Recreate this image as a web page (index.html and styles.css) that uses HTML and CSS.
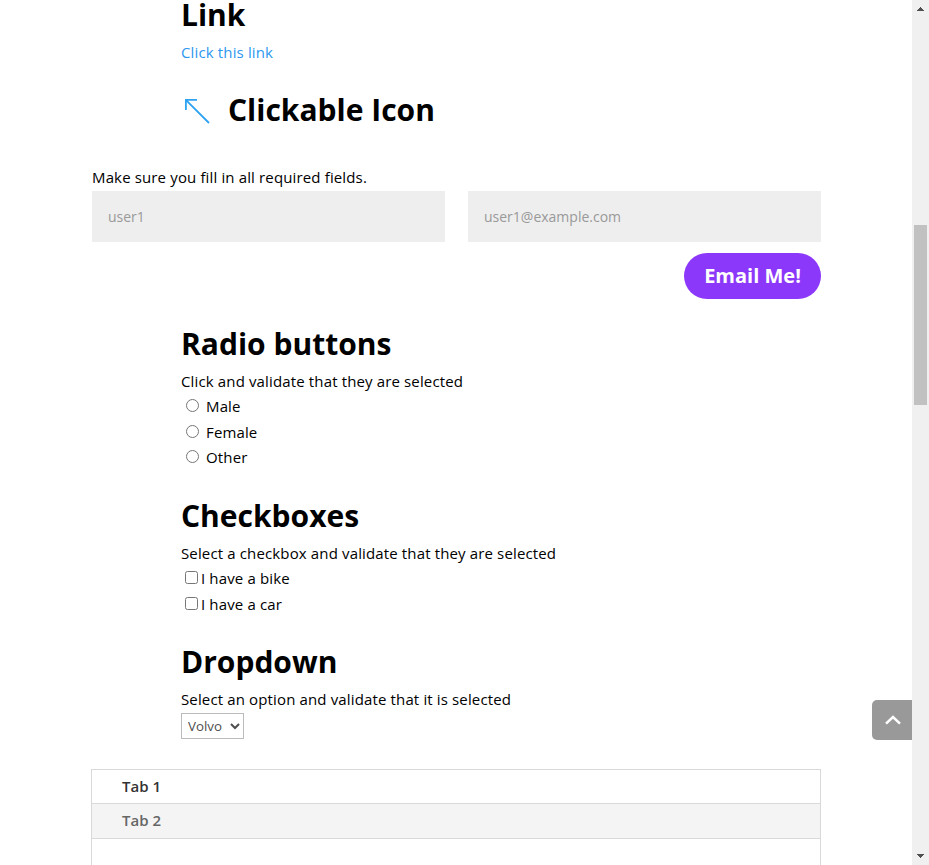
FILE: index.html
```
<!DOCTYPE html>
<html lang="en">
<head>
<meta charset="utf-8">
<title>Automation Practice</title>
<link rel="stylesheet" href="styles.css">
</head>
<body>
<div class="window">
  <main class="page">
    <section class="module link-module">
      <h2>Link</h2>
      <p><a href="#">Click this link</a></p>
    </section>
    <section class="module icon-module">
      <a href="#" class="arrow-link"><svg width="26" height="26" viewBox="0 0 26 26"><path d="M1.9 12V1.9H13M2.3 2.3L25 25" fill="none" stroke="#2ea3f2" stroke-width="1.8"/></svg></a>
      <h2>Clickable Icon</h2>
    </section>
    <form class="contact">
      <p>Make sure you fill in all required fields.</p>
      <div class="fields">
        <input type="text" placeholder="user1">
        <input type="text" placeholder="user1@example.com">
      </div>
      <button type="button">Email Me!</button>
    </form>
    <section class="module radio-module">
      <h2>Radio buttons</h2>
      <p>Click and validate that they are selected</p>
      <label class="row radio"><input type="radio" name="gender">Male</label>
      <label class="row radio"><input type="radio" name="gender">Female</label>
      <label class="row radio"><input type="radio" name="gender">Other</label>
    </section>
    <section class="module check-module">
      <h2>Checkboxes</h2>
      <p>Select a checkbox and validate that they are selected</p>
      <label class="row check"><input type="checkbox">I have a bike</label>
      <label class="row check"><input type="checkbox">I have a car</label>
    </section>
    <section class="module drop-module">
      <h2>Dropdown</h2>
      <p>Select an option and validate that it is selected</p>
      <select><option>Volvo</option></select>
    </section>
    <section class="tabs">
      <div class="tab active">Tab 1</div>
      <div class="tab">Tab 2</div>
      <div class="panel"></div>
    </section>
    <a href="#" class="to-top"><svg width="40" height="40" viewBox="0 0 40 40"><path d="M14 23.6L21 17L28 23.6" fill="none" stroke="#fff" stroke-width="2.5"/></svg></a>
  </main>
  <div class="scrollbar">
    <svg class="cap" width="17" height="17" viewBox="0 0 17 17" shape-rendering="crispEdges"><path d="M5 11V10H6V9H7V8H8V7H9V8H10V9H11V10H12V11Z" fill="#505050"/></svg>
    <div class="thumb"></div>
    <svg class="cap" width="17" height="17" viewBox="0 0 17 17" shape-rendering="crispEdges"><path d="M5 6V7H6V8H7V9H8V10H9V9H10V8H11V7H12V6Z" fill="#505050"/></svg>
  </div>
</div>
</body>
</html>
```
FILE: styles.css
```
* { box-sizing: border-box; }
body {
  margin: 0;
  background: #fff;
  color: #000;
  font: 500 15px/25.5px "Open Sans", "Noto Sans", sans-serif;
  overflow: hidden;
}
h2, p { margin: 0; }
p, .row { letter-spacing: 0.14px; }
h2 { font-size: 30px; line-height: 30px; font-weight: 700; padding-bottom: 10px; }
a { color: #2e98f0; text-decoration: none; }
.window { display: flex; height: 865px; overflow: hidden; }
.page { flex: 1; height: 865px; padding: 0 91px; overflow: hidden; position: relative; }
.module { width: 550px; margin-left: 90px; }
.link-module { height: 93px; }
.icon-module { display: flex; align-items: flex-start; gap: 17px; height: 71px; padding-top: 2px; }
.arrow-link { width: 30px; height: 30px; padding: 3px 0 0 3px; line-height: 0; }
.contact { height: 165px; width: 730px; padding-left: 1px; display: flex; flex-direction: column; }
.contact p { height: 27px; padding-top: 1px; }
.fields { display: flex; gap: 23px; }
.fields input {
  width: 353px; height: 51px; padding: 0 16px; border: 0; border-radius: 0;
  background: #eee; font: 400 14px "Open Sans", sans-serif;
}
.fields input::placeholder { color: #999; }
.contact button {
  align-self: flex-end; margin-top: 11px; width: 137px; height: 46px; padding: 0 0 2px;
  border: 0; border-radius: 23px; background: #8c38fa; color: #fff;
  font: 700 20px "Open Sans", sans-serif;
}
.radio-module { height: 172px; }
.check-module { height: 146px; }
.drop-module { height: 122px; }
.radio-module p, .check-module p, .drop-module p { height: 25px; }
.row { display: flex; align-items: flex-start; }
.row input { width: 13px; height: 13px; margin: 5px 7px 0 5px; }
.row.check input { margin: 5px 3px 0 4px; }
select {
  display: block; width: 63px; height: 26px; margin-top: 1px; padding: 0 2px;
  border: 1px solid #bbb; border-radius: 0; background: #fff; color: #4e4e4e;
  font: 400 13.333px "Open Sans", sans-serif;
}
.tabs { width: 730px; border: 1px solid #d9d9d9; border-bottom: 0; font-weight: 600; }
.tab { height: 35px; line-height: 32px; padding-left: 30px; color: #666; background: #f4f4f4; border-bottom: 1px solid #d9d9d9; }
.tab.active { height: 34px; line-height: 33px; color: #333; background: #fff; }
.panel { height: 60px; }
.to-top {
  position: absolute; right: 0; top: 700px; width: 40px; height: 40px;
  background: #999; border-radius: 5px 0 0 5px; line-height: 0;
}
.scrollbar { width: 17px; height: 865px; background: #f0f0f0; display: flex; flex-direction: column; }
.cap { display: block; }
.thumb { width: 13px; height: 180px; margin: 208px 2px auto; background: #c1c1c1; }
```
